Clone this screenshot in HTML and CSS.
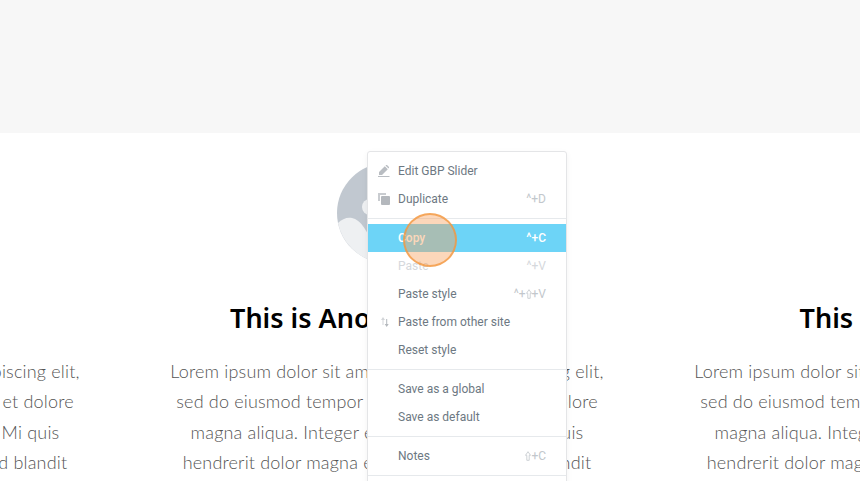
FILE: index.html
```html
<!DOCTYPE html>
<html lang="en">
<head>
  <meta charset="UTF-8">
  <meta name="viewport" content="width=device-width, initial-scale=1.0">
  <title>GBP Slider</title>
  <link rel="stylesheet" href="styles.css">
</head>

<body>
  <div class="page">
    <div class="top-band"></div>

    <!-- Slides -->
    <div class="slider">
      <div class="slide">
        <div class="avatar"></div>
        <h2>This is Good Title</h2>
        <p>Lorem ipsum dolor sit amet, consectetur adipiscing elit,<br>sed do eiusmod tempor incididunt ut labore et dolore<br>magna aliqua. Integer enim neque rutrum. Mi quis<br>hendrerit dolor magna eget est sit lorem sed blandit</p>
      </div>
      <div class="slide">
        <svg class="avatar" viewBox="0 0 100 100">
          <circle cx="50" cy="50" r="50" fill="#c1c8d0"/>
          <circle cx="33" cy="44" r="8" fill="#eef0f2"/>
          <path d="M1 60C5 56 10 54 15 55C24 57 32 68 42 99.400A50 50 0 0 1 1 60Z" fill="#eef0f2"/>
        </svg>
        <h2>This is Another Heading</h2>
        <p>Lorem ipsum dolor sit amet, consectetur adipiscing elit,<br>sed do eiusmod tempor incididunt ut labore et dolore<br>magna aliqua. Integer enim neque rutrum. Mi quis<br>hendrerit dolor magna eget est sit lorem sed blandit</p>
      </div>
      <div class="slide">
        <div class="avatar"></div>
        <h2>This is Good Title</h2>
        <p>Lorem ipsum dolor sit amet, consectetur adipiscing elit,<br>sed do eiusmod tempor incididunt ut labore et dolore<br>magna aliqua. Integer enim neque rutrum. Mi quis<br>hendrerit dolor magna eget est sit lorem sed blandit</p>
      </div>
    </div>

    <!-- Context menu -->
    <div class="menu">
      <div class="menu-group">
        <div class="menu-item">
          <svg class="menu-icon" viewBox="0 0 12 12"><path d="M1 7 6.800 1.200 9.800 4.200 4 10H1Z M7.500.5 8.200 0H9L11 2V2.800L10.500 3.500Z M0 11H11.500V12H0Z" fill="#b9bdc2"/></svg>
          <span>Edit GBP Slider</span>
        </div>
        <div class="menu-item">
          <svg class="menu-icon" viewBox="0 0 12 12"><path d="M0 0H8V2H2V8H0Z" fill="#c9ccd0"/><rect x="3" y="3" width="9" height="9" rx="1" fill="#b4b8bd"/></svg>
          <span>Duplicate</span><kbd>^+D</kbd>
        </div>
      </div>
      <div class="menu-group">
        <div class="menu-item active"><span>Copy</span><kbd>^+C</kbd></div>
        <div class="menu-item disabled"><span>Paste</span><kbd>^+V</kbd></div>
        <div class="menu-item">
          <span>Paste style</span>
          <kbd>^+<svg class="shift" viewBox="0 0 6 10"><path d="M3 .7 5.500 4.300H4.200V9.300H1.800V4.300H.5Z" fill="none" stroke="#c2c7cc" stroke-width=".8"/></svg>+V</kbd>
        </div>
        <div class="menu-item">
          <svg class="menu-icon" viewBox="0 0 12 12"><path d="M5 1 7 4H5.500V9H4.500V4H3Z" fill="#d3d6d9"/><path d="M8.700 11 6.700 8H8.200V3H9.200V8H10.700Z" fill="#b4b8bd"/></svg>
          <span>Paste from other site</span>
        </div>
        <div class="menu-item"><span>Reset style</span></div>
      </div>
      <div class="menu-group">
        <div class="menu-item"><span>Save as a global</span></div>
        <div class="menu-item"><span>Save as default</span></div>
      </div>
      <div class="menu-group">
        <div class="menu-item">
          <span>Notes</span>
          <kbd><svg class="shift" viewBox="0 0 6 10"><path d="M3 .7 5.500 4.300H4.200V9.300H1.800V4.300H.5Z" fill="none" stroke="#c2c7cc" stroke-width=".8"/></svg>+C</kbd>
        </div>
      </div>
      <div class="menu-group">
        <div class="menu-item"><span>Navigator</span></div>
      </div>
    </div>

    <!-- Click marker -->
    <div class="cursor-dot"></div>
  </div>
</body>
</html>
```

FILE: styles.css
```css
/* Page */
html, body {
  margin: 0;
  height: 100%;
  overflow: hidden;
}

.page {
  position: relative;
  height: 481px;
  overflow: hidden;
  background-color: #fff;
  font-family: "Lato", "Noto Sans", sans-serif;
}

.top-band {
  height: 133px;
  background-color: #f7f7f7;
}

/* Slides */
.slider {
  display: flex;
  margin-left: -399px;
  padding-top: 30px;
}

.slide {
  flex: 0 0 524px;
  display: flex;
  flex-direction: column;
  align-items: center;
  text-align: center;
}

.avatar {
  display: block;
  width: 100px;
  height: 100px;
  margin-bottom: 37px;
}

.slide h2 {
  margin: 0 0 19.7px;
  font-family: "Noto Sans", sans-serif;
  font-size: 27px;
  font-weight: 600;
  line-height: 36px;
  color: #000;
  white-space: nowrap;
}

.slide p {
  margin: 0;
  font-size: 18px;
  font-weight: 300;
  line-height: 30.6px;
  letter-spacing: 0.18px;
  color: #555;
  white-space: nowrap;
}

/* Context menu */
.menu {
  position: absolute;
  left: 367px;
  top: 151px;
  width: 198px;
  background-color: #fff;
  border: 1px solid #e4e5e7;
  border-radius: 3px;
  box-shadow: 0 2px 6px rgba(0, 0, 0, 0.05);
  font-family: "Roboto", sans-serif;
  font-size: 12px;
  color: #6d7882;
}

.menu-group {
  padding: 5px 0;
  border-bottom: 1px solid #e6e9ec;
}

.menu-item {
  position: relative;
  display: flex;
  justify-content: space-between;
  align-items: center;
  height: 28px;
  padding: 0 20px 0 30px;
}

.menu-icon {
  position: absolute;
  left: 10px;
  top: 8px;
  width: 12px;
  height: 12px;
}

.menu-item kbd {
  font-family: inherit;
  font-size: 12px;
  color: #c2c7cc;
}

.shift {
  width: 6px;
  height: 10px;
  vertical-align: -1px;
}

.menu-item.active {
  background-color: #6dd4f7;
  color: #fff;
  font-weight: 500;
}

.menu-item.active kbd {
  color: #fff;
}

.menu-item.disabled {
  color: #d5d8dc;
}

.menu-item.disabled kbd {
  color: #d5d8dc;
}

/* Click marker */
.cursor-dot {
  position: absolute;
  left: 403px;
  top: 213px;
  width: 50px;
  height: 50px;
  border: 2px solid rgba(243, 150, 60, 0.75);
  border-radius: 50%;
  background-color: rgba(248, 160, 90, 0.42);
}
```
